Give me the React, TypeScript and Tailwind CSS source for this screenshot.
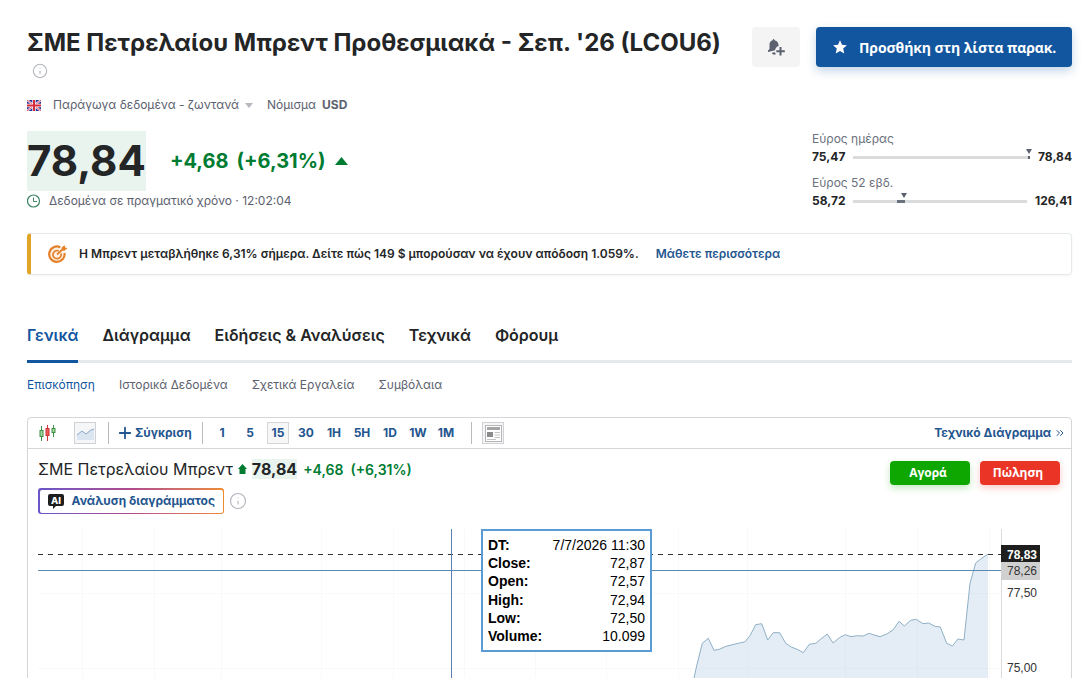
import { ChevronsRight, Info, Plus } from 'lucide-react'

const periods = ['1', '5', '15', '30', '1H', '5H', '1D', '1W', '1M']

const tabs = ['Γενικά', 'Διάγραμμα', 'Ειδήσεις & Αναλύσεις', 'Τεχνικά', 'Φόρουμ']

const subTabs = ['Επισκόπηση', 'Ιστορικά Δεδομένα', 'Σχετικά Εργαλεία', 'Συμβόλαια']

const tooltipRows = [
  { label: 'DT:', value: '7/7/2026 11:30' },
  { label: 'Close:', value: '72,87' },
  { label: 'Open:', value: '72,57' },
  { label: 'High:', value: '72,94' },
  { label: 'Low:', value: '72,50' },
  { label: 'Volume:', value: '10.099' },
]

const gridX = [82, 154, 221, 321, 393, 464, 535, 606, 678, 747, 845, 917, 989]

const line =
  '694,678 696.7,665.7 702.3,643.3 708.3,638.3 714,650.3 719.3,649.3 726,646.3 739.3,643 744.7,642 750,635.7 755.7,624.7 761.7,623.7 767.7,640 773.3,632.7 779.7,632.7 785.7,643.3 791.3,647 798,649.7 803.3,652.7 809.3,644.3 815.7,643.3 821.7,638.3 827.3,634 833,643 839.3,637.7 845.3,634.7 851,636.7 857.3,635.7 863.3,636 869,633.3 875,635.3 880,636.7 886.7,634 893.3,629.7 899,621.3 904.3,626 910.7,620.3 916.3,619.3 923,623.7 928.7,623 935,626.3 940.3,627 946.7,643.3 952.3,646 958,639 964,640 970,583.3 975.7,563 981.7,558.3 988,554'

function BellPlus() {
  return (
    <svg width="18" height="18" viewBox="0 0 18 18">
      <path
        d="M6.500.8L8 2.500c2.200.5 3.300 2 3.500 4.300l.2 1.200c-2 .6-3.300 2.100-3.600 4.200L1 14v-1.500L2.500 11V6.800c0-2.200.9-3.700 2.800-4.300z"
        fill="#5b616e"
      />
      <path d="M4.800 14.800l3.200-.6.8 2-1.300.6c-1.300 0-2.300-.8-2.700-2z" fill="#5b616e" />
      <path d="M13.500 9v8.500M9.300 13.300h8.500" stroke="#5b616e" strokeWidth="2" />
    </svg>
  )
}

function Flag() {
  return (
    <svg width="14" height="11" viewBox="0 0 14 11">
      <rect width="14" height="11" fill="#2a3494" />
      <path d="M0 0l14 11M14 0L0 11" stroke="#fff" strokeWidth="2" />
      <path d="M0 0l14 11M14 0L0 11" stroke="#d8283c" strokeWidth=".8" />
      <path d="M7 0v11M0 5.500h14" stroke="#fff" strokeWidth="3.400" />
      <path d="M7 0v11M0 5.500h14" stroke="#d8283c" strokeWidth="2" />
    </svg>
  )
}

function Target() {
  return (
    <svg width="20" height="20" viewBox="0 0 20 20" fill="none">
      <circle cx="9" cy="10.500" r="8" fill="#fdf0e4" />
      <path d="M12.300 3.300A7.700 7.700 0 1 0 16.500 9" stroke="#e5812b" strokeWidth="2.200" />
      <path d="M10.800 6.900A4.100 4.100 0 1 0 13 9.500" stroke="#e5812b" strokeWidth="1.700" />
      <path d="M9 10.500l6-5.500" stroke="#e5812b" strokeWidth="1.700" />
      <path d="M13.500 3.700L16.500 1l.6 2.400 2.400.6-2.900 2.800-2.600-.4z" fill="#e5812b" />
    </svg>
  )
}

function CandleIcon() {
  return (
    <svg width="18" height="18" viewBox="0 0 18 18">
      <path d="M3.500 2v15M15.500 1v12" stroke="#3f8f45" />
      <path d="M9.500 1v16" stroke="#c33" />
      <rect x="2" y="6.500" width="3" height="6" fill="#a5d6a0" stroke="#3f8f45" />
      <rect x="8" y="4.500" width="3" height="7" fill="#ee5a5a" stroke="#c33" />
      <rect x="14" y="4.500" width="3" height="4" fill="#a5d6a0" stroke="#3f8f45" />
    </svg>
  )
}

function AreaIcon() {
  return (
    <svg width="17" height="13" viewBox="0 0 17 13">
      <path d="M0 8l5-4 4 3 5-4 3-1v11H0z" fill="#dbe4f1" />
      <path d="M0 8l5-4 4 3 5-4 3-1" fill="none" stroke="#8ba6c9" />
    </svg>
  )
}

function NewsIcon() {
  return (
    <svg width="17" height="17" viewBox="0 0 17 17">
      <rect x=".5" y=".5" width="16" height="16" fill="#fff" stroke="#b5b5b5" />
      <path d="M2 3.500h13" stroke="#a5a5a5" strokeWidth="3" />
      <rect x="2" y="7" width="6" height="5" fill="#8a8a8a" />
      <path d="M9.500 7.500H15M9.500 10H15M9.500 12.500H15M2 14.500h9" stroke="#c4c4c4" />
    </svg>
  )
}

function Chart() {
  return (
    <svg className="block" width="1043" height="149" viewBox="28 529 1043 149">
      <g stroke="#f8f9f9" shapeRendering="crispEdges">
        {gridX.map((x) => (
          <path key={x} d={`M${x}.5 529v149`} />
        ))}
        <path d="M38 593.500h963M38 668.500h963" />
      </g>
      <polygon points={`${line} 988,678`} fill="#b5cde4" fillOpacity=".36" />
      <polyline points={line} fill="none" stroke="#8fb0c6" />
      <path d="M1001.500 529v149" stroke="#dcdcdc" />
      <path d="M38 554.500h964" stroke="#333" strokeDasharray="5 5" />
      <path d="M38 570.500h964" stroke="#5b8aae" />
      <path d="M451.500 529v149" stroke="#5b7fae" />
      <rect x="1001" y="545" width="39" height="17" fill="#1e1e1e" />
      <rect x="1001" y="562" width="39" height="18" fill="#d0d0d0" />
      <g fontFamily="Liberation Sans, sans-serif" fontSize="12" fill="#333">
        <text x="1007" y="559" fill="#fff" fontWeight="700">78,83</text>
        <text x="1007" y="575">78,26</text>
        <text x="1007" y="597">77,50</text>
        <text x="1007" y="672">75,00</text>
      </g>
    </svg>
  )
}

function Range({ title, low, high, children }: { title: string; low: string; high: string; children: React.ReactNode }) {
  return (
    <div className="h-11">
      <div className="h-4 text-[12px] leading-4 text-[#6a707c]">{title}</div>
      <div className="flex h-5 items-center gap-2 text-[12px] font-bold text-[#232526]">
        <span>{low}</span>
        <div className="relative h-[3px] flex-1 bg-[#d9dbdc]">{children}</div>
        <span>{high}</span>
      </div>
    </div>
  )
}

export default function App() {
  return (
    <div className="h-[678px] w-[1089px] overflow-hidden bg-white pt-[27px] pr-[17px] pl-[27px] font-['Inter','Liberation_Sans',sans-serif] text-[#232526]">
      {/* Title and actions */}
      <header className="flex h-[68px] justify-between">
        <div>
          <h1 className="text-[24px] leading-8 font-bold whitespace-nowrap">
            ΣΜΕ Πετρελαίου Μπρεντ Προθεσμιακά - Σεπ. '26 (LCOU6)
          </h1>
          <Info className="mt-[4px] ml-[5px] size-[16px] text-[#b0b4ba]" strokeWidth={1.6} />
        </div>
        <div className="flex gap-4">
          <button className="flex h-10 w-12 items-center justify-center rounded bg-[#f4f4f5]">
            <BellPlus />
          </button>
          <button className="flex h-10 w-64 items-center rounded bg-[#1256a0] pl-[17px] font-['Open_Sans',sans-serif] text-[14px] font-bold tracking-[-0.08px] whitespace-nowrap text-white shadow-[0_4px_10px_rgba(18,86,160,0.25)]">
            <svg className="mr-[12px]" width="14" height="14" viewBox="0 0 14 14">
              <path d="M7 .3l2 4.500 4.900.5-3.700 3.300 1.100 4.900L7 11l-4.300 2.500 1.100-4.900L.1 5.300 5 4.800z" fill="#fff" />
            </svg>
            Προσθήκη στη λίστα παρακ.
          </button>
        </div>
      </header>

      <div className="flex h-5 items-center text-[12px] whitespace-nowrap text-[#5b616e]">
        <Flag />
        <span className="ml-[12px]">Παράγωγα δεδομένα - ζωντανά</span>
        <svg className="ml-[6px]" width="8" height="5" viewBox="0 0 8 5">
          <path d="M0 0h8L4 5z" fill="#b5b8bd" />
        </svg>
        <span className="ml-[14px]">Νόμισμα</span>
        <span className="ml-[6px] font-bold">USD</span>
      </div>

      {/* Price */}
      <section className="flex h-[118px] justify-between pt-4">
        <div>
          <div className="flex h-[60px] items-center">
            <span className="bg-[#e9f4ee] text-[42px] leading-[60px] font-bold">78,84</span>
            <span className="ml-[24px] text-[20px] font-bold text-[#007c32]">+4,68</span>
            <span className="ml-2 text-[20px] font-bold text-[#007c32]">(+6,31%)</span>
            <svg className="ml-[9px]" width="13" height="8" viewBox="0 0 13 8">
              <path d="M0 8h13L6.500 0z" fill="#007c32" />
            </svg>
          </div>
          <div className="flex h-5 items-center gap-2 text-[12px] text-[#5b616e]">
            <svg width="14" height="14" viewBox="0 0 14 14" fill="none" stroke="#3b8361">
              <circle cx="6.500" cy="7" r="6" strokeWidth="1.200" />
              <path d="M6.500 3.500v4h3.500" />
            </svg>
            <span>Δεδομένα σε πραγματικό χρόνο · 12:02:04</span>
          </div>
        </div>
        <div className="w-[260px]">
          <Range title="Εύρος ημέρας" low="75,47" high="78,84">
            <span className="absolute right-0 h-[3px] w-[2px] bg-[#5b616e]" />
            <svg className="absolute -top-[7px] -right-[2px]" width="6" height="5" viewBox="0 0 6 5">
              <path d="M0 0h6L3 5z" fill="#5b616e" />
            </svg>
          </Range>
          <Range title="Εύρος 52 εβδ." low="58,72" high="126,41">
            <span className="absolute left-[25%] h-[3px] w-2 bg-[#6a707c]" />
            <svg className="absolute -top-[7px] left-[48px]" width="6" height="5" viewBox="0 0 6 5">
              <path d="M0 0h6L3 5z" fill="#5b616e" />
            </svg>
          </Range>
        </div>
      </section>

      {/* Promo strip */}
      <div className="flex h-[42px] items-center rounded-[4px] border border-l-4 border-[#e6e9eb] border-l-[#e0a526] text-[12px] font-semibold whitespace-nowrap shadow-[0_1px_3px_rgba(0,0,0,0.05)]">
        <span className="ml-[17px]">
          <Target />
        </span>
        <span className="ml-[11px]">
          Η Μπρεντ μεταβλήθηκε 6,31% σήμερα. Δείτε πώς 149 $ μπορούσαν να έχουν απόδοση 1.059%.
        </span>
        <span className="ml-[17px] text-[#24568f]">Μάθετε περισσότερα</span>
      </div>

      <nav className="mt-[45px] flex h-[43px] gap-6 border-b-[3px] border-[#e6e9eb] text-[16px] font-semibold whitespace-nowrap">
        {tabs.map((tab, i) => (
          <span
            key={tab}
            className={i === 0 ? 'h-[43px] border-b-[3px] border-[#1256a0] leading-[30px] text-[#1256a0]' : 'leading-[30px]'}
          >
            {tab}
          </span>
        ))}
      </nav>
      <nav className="flex h-[54px] gap-6 pt-3 text-[12px] leading-5 whitespace-nowrap text-[#5b616e]">
        {subTabs.map((tab, i) => (
          <span key={tab} className={i === 0 ? 'text-[#1256a0]' : ''}>
            {tab}
          </span>
        ))}
      </nav>

      {/* Chart card */}
      <section className="h-[270px] rounded-t-[4px] border border-[#d4d6d8]">
        <div className="flex h-[31px] items-center border-b border-[#d4d6d8] text-[12px] font-bold whitespace-nowrap text-[#24568f]">
          <span className="ml-[10px]">
            <CandleIcon />
          </span>
          <span className="ml-[18px] flex h-[22px] w-[22px] items-center justify-center border border-[#cfd1d4] bg-[#f5f6f8]">
            <AreaIcon />
          </span>
          <span className="ml-[12px] h-[22px] w-px bg-[#b9bbbe]" />
          <Plus className="ml-[7px] size-[18px]" strokeWidth={2.4} />
          <span className="ml-px w-[57px]">Σύγκριση</span>
          <span className="ml-[10px] h-[22px] w-px bg-[#b9bbbe]" />
          <div className="ml-[5px] flex">
            {periods.map((p) => (
              <span
                key={p}
                className={
                  p === '15'
                    ? 'mx-[3px] flex h-[22px] w-[22px] items-center justify-center border border-[#d4d6d8] bg-[#f7f7f8]'
                    : 'flex h-[22px] w-7 items-center justify-center'
                }
              >
                {p}
              </span>
            ))}
          </div>
          <span className="ml-[11px] h-[22px] w-px bg-[#b9bbbe]" />
          <span className="ml-[10px] flex h-[22px] w-[22px] items-center justify-center border border-[#cfd1d4] bg-[#f5f6f8]">
            <NewsIcon />
          </span>
          <span className="ml-auto">Τεχνικό Διάγραμμα</span>
          <ChevronsRight className="mr-[5px] ml-[3px] size-[12px]" strokeWidth={2} />
        </div>

        <div className="flex h-[80px] justify-between pr-[11px] pl-[10px]">
          <div>
            <div className="mt-[10px] flex h-5 items-center whitespace-nowrap">
              <span className="text-[16px]">ΣΜΕ Πετρελαίου Μπρεντ</span>
              <svg className="ml-[5px]" width="9" height="10" viewBox="0 0 9 10">
                <path d="M4.500 0L9 5H7.500v5h-6V5H0z" fill="#007c32" />
              </svg>
              <span className="ml-[5px] bg-[#e9f4ee] text-[16px] leading-5 font-bold">78,84</span>
              <span className="ml-[6px] text-[14px] font-semibold text-[#007c32]">+4,68</span>
              <span className="ml-[7px] text-[14px] font-semibold text-[#007c32]">(+6,31%)</span>
            </div>
            <div className="mt-[9px] flex items-center gap-[5px]">
              <div className="h-[26px] w-[186px] rounded-[3px] bg-linear-to-r from-[#6a55c8] via-[#b04a8d] to-[#ee8a2c] p-[1.5px]">
                <div className="flex h-[23px] items-center rounded-[2px] bg-white pl-[8px] text-[12px] font-bold whitespace-nowrap text-[#24568f]">
                  <svg className="mr-[8px]" width="16" height="15" viewBox="0 0 16 15">
                    <path d="M2 0h12q2 0 2 2v8q0 2-2 2H8l-3 3v-3H2q-2 0-2-2V2q0-2 2-2z" fill="#1e1e1e" />
                    <text x="3" y="9.500" fontFamily="Inter" fontSize="9.500" fontWeight="800" fill="#fff">AI</text>
                  </svg>
                  Ανάλυση διαγράμματος
                </div>
              </div>
              <Info className="size-[18px] text-[#b0b4ba]" strokeWidth={1.5} />
            </div>
          </div>
          <div className="flex gap-[10px] pt-3 font-['Open_Sans',sans-serif] text-[12px] font-bold text-white">
            <button className="h-6 w-20 rounded-[4px] bg-[#0ea600] pr-1 shadow-[0_3px_7px_rgba(14,166,0,0.25)]">Αγορά</button>
            <button className="h-6 w-20 rounded-[4px] bg-[#e93426] pr-1 shadow-[0_3px_7px_rgba(233,52,38,0.25)]">Πώληση</button>
          </div>
        </div>

        <div className="relative">
          <Chart />
          <div className="absolute top-0 left-[453px] flex h-[123px] w-[171px] flex-col border-2 border-[#5b9bd5] bg-white px-[5px] pt-[5px] font-['Liberation_Sans',sans-serif] text-[14px] leading-[18.200px] text-black">
            {tooltipRows.map((row) => (
              <div key={row.label} className="flex justify-between">
                <b>{row.label}</b>
                <span>{row.value}</span>
              </div>
            ))}
          </div>
        </div>
      </section>
    </div>
  )
}
